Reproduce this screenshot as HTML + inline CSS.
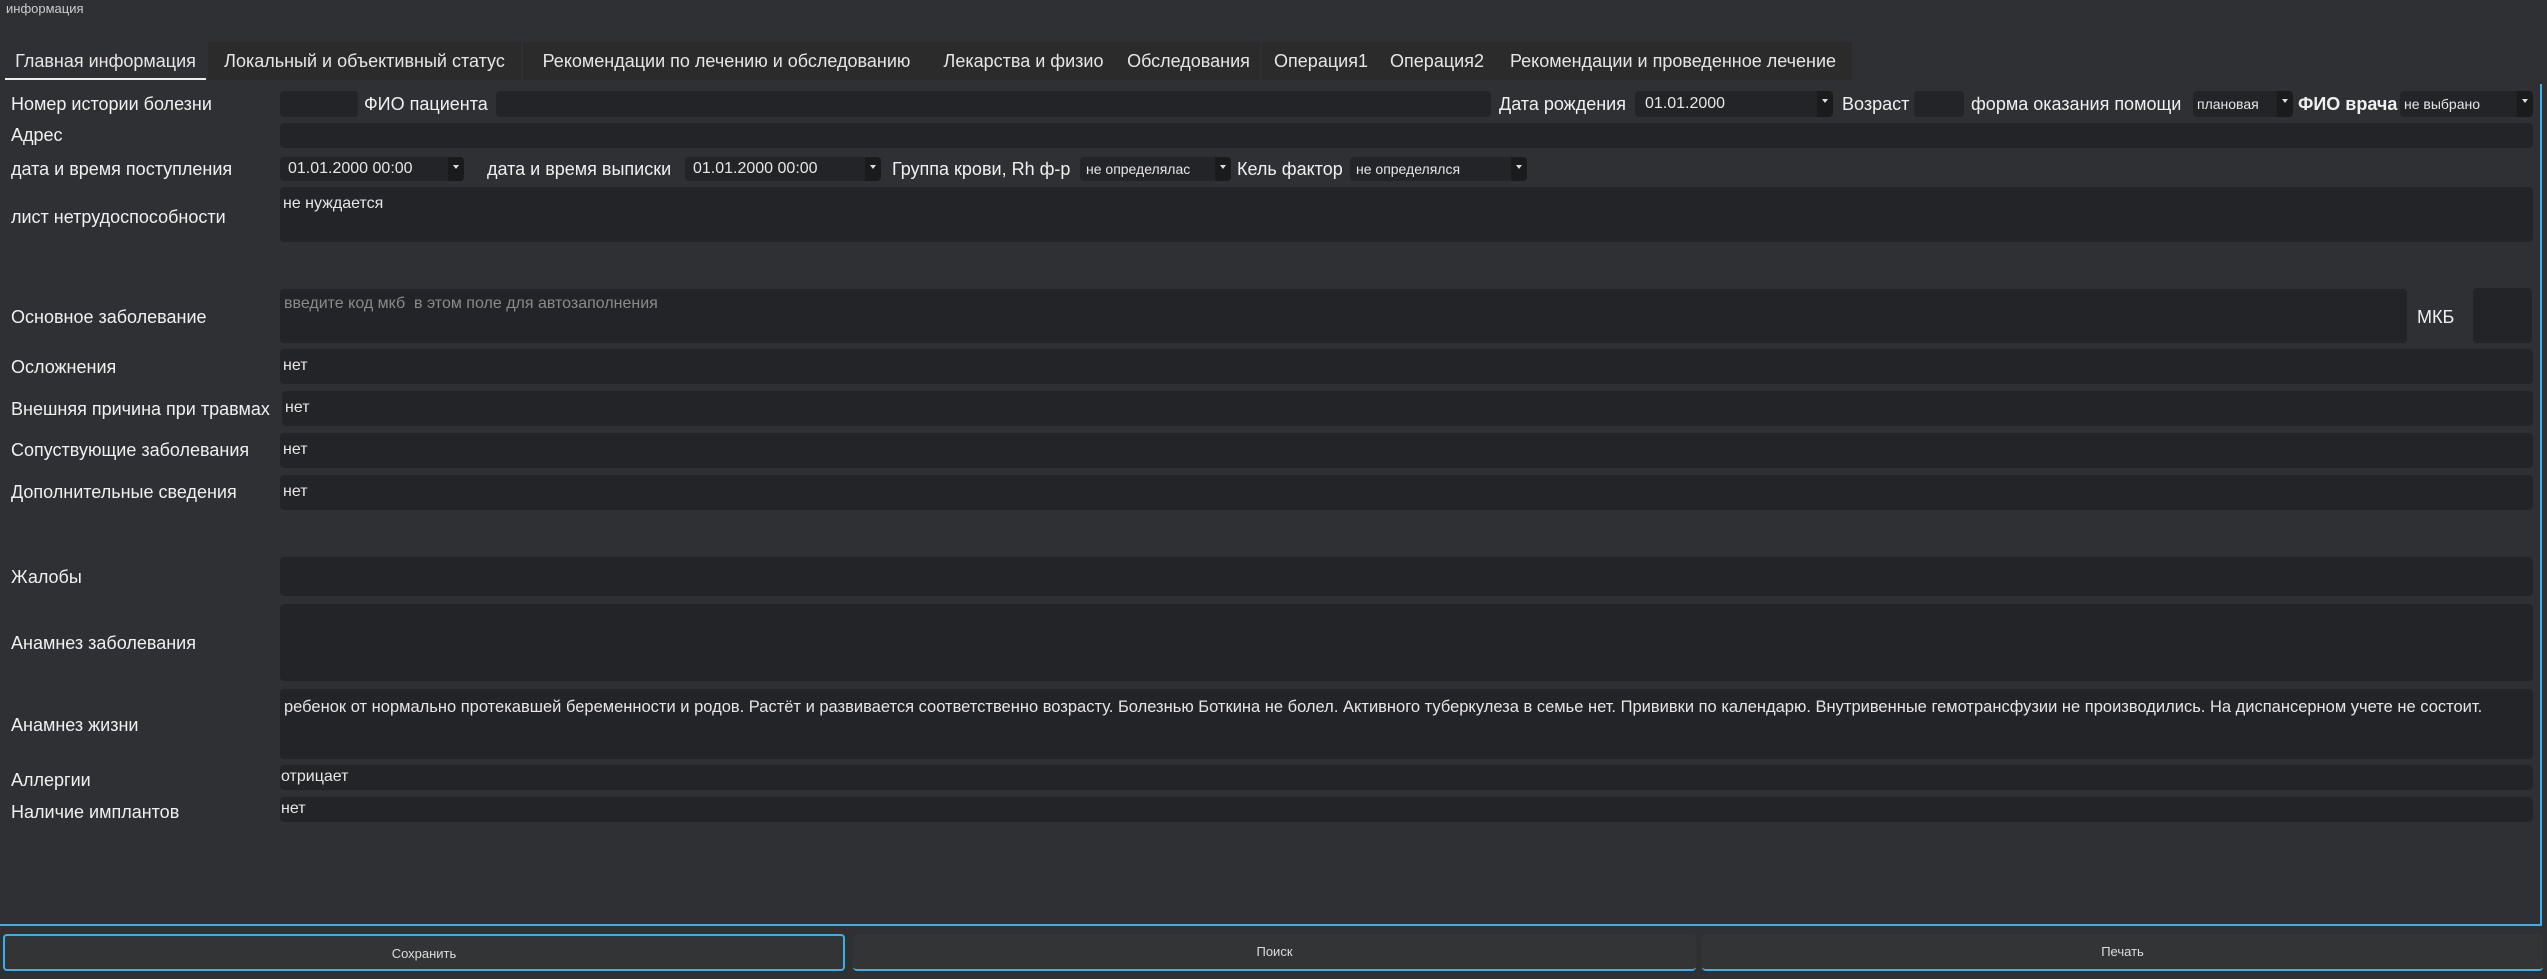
<!DOCTYPE html>
<html><head><meta charset="utf-8"><style>
*{margin:0;padding:0;box-sizing:border-box}
body{width:2547px;height:979px;background:#2f3033;font-family:"Liberation Sans","DejaVu Sans",sans-serif;color:#eff0f1;position:relative;overflow:hidden}
.a{position:absolute;white-space:nowrap}
.l{font-size:18px;line-height:22px}
.b{background:#232427;border-radius:4px}
.t{font-size:16px;color:#e6e6e6}
.tab{position:absolute;top:42px;height:38px;background:#2b2b2c;font-size:18px;line-height:38px;text-align:center;color:#e6e6e6}
.dd{position:absolute;right:0;top:0;bottom:0;width:16px;background:#1a1b1c;border-radius:0 4px 4px 0}
.dd:after{content:"";position:absolute;left:5px;top:8px;border:3px solid transparent;border-top:4px solid #ddd}
.btn{position:absolute;top:934px;height:37px;background:#333435;border-bottom:2px solid #3daee9;border-radius:4px;font-size:13px;text-align:center;line-height:36px;color:#ddd}
</style></head><body>
<div class="a" style="left:6px;top:1px;font-size:13px;color:#ccc">информация</div>
<div class="tab" style="left:5px;width:201px;background:#2f3033;border-bottom:2px solid #eee">Главная информация</div>
<div class="tab" style="left:208px;width:313px">Локальный и объективный статус</div>
<div class="tab" style="left:523px;width:407px">Рекомендации по лечению и обследованию</div>
<div class="tab" style="left:930px;width:187px">Лекарства и физио</div>
<div class="tab" style="left:1117px;width:143px">Обследования</div>
<div class="tab" style="left:1262px;width:118px">Операция1</div>
<div class="tab" style="left:1380px;width:114px">Операция2</div>
<div class="tab" style="left:1494px;width:358px">Рекомендации и проведенное лечение</div>
<div class="a" style="left:2540px;top:84px;width:2px;height:842px;background:#3daee9"></div>
<div class="a" style="left:0;top:924px;width:2542px;height:2px;background:#3daee9"></div>

<div class="a l" style="left:11px;top:93px">Номер истории болезни</div>
<div class="a b" style="left:280px;top:91px;width:78px;height:26px"></div>
<div class="a l" style="left:364px;top:93px">ФИО пациента</div>
<div class="a b" style="left:496px;top:91px;width:995px;height:26px"></div>
<div class="a l" style="left:1499px;top:93px">Дата рождения</div>
<div class="a b" style="left:1635px;top:91px;width:198px;height:26px"><span class="a t" style="left:10px;top:4px">01.01.2000</span><div class="dd"></div></div>
<div class="a l" style="left:1842px;top:93px">Возраст</div>
<div class="a b" style="left:1914px;top:91px;width:50px;height:26px"></div>
<div class="a l" style="left:1971px;top:93px">форма оказания помощи</div>
<div class="a b" style="left:2193px;top:91px;width:100px;height:26px"><span class="a t" style="left:4px;top:5px;font-size:14px">плановая</span><div class="dd"></div></div>
<div class="a l" style="left:2298px;top:93px;font-weight:bold">ФИО врача</div>
<div class="a b" style="left:2400px;top:91px;width:133px;height:26px"><span class="a t" style="left:4px;top:5px;font-size:14px">не выбрано</span><div class="dd"></div></div>

<div class="a l" style="left:11px;top:124px">Адрес</div>
<div class="a b" style="left:280px;top:123px;width:2253px;height:25px"></div>

<div class="a l" style="left:11px;top:158px">дата и время поступления</div>
<div class="a b" style="left:280px;top:157px;width:184px;height:24px"><span class="a t" style="left:8px;top:3px">01.01.2000 00:00</span><div class="dd"></div></div>
<div class="a l" style="left:487px;top:158px">дата и время выписки</div>
<div class="a b" style="left:685px;top:157px;width:196px;height:24px"><span class="a t" style="left:8px;top:3px">01.01.2000 00:00</span><div class="dd"></div></div>
<div class="a l" style="left:892px;top:158px">Группа крови, Rh ф-р</div>
<div class="a b" style="left:1080px;top:157px;width:151px;height:24px"><span class="a t" style="left:6px;top:4px;font-size:14px">не определялас</span><div class="dd"></div></div>
<div class="a l" style="left:1237px;top:158px">Кель фактор</div>
<div class="a b" style="left:1350px;top:157px;width:177px;height:24px"><span class="a t" style="left:6px;top:4px;font-size:14px">не определялся</span><div class="dd"></div></div>

<div class="a l" style="left:11px;top:206px">лист нетрудоспособности</div>
<div class="a b" style="left:280px;top:187px;width:2253px;height:55px"><span class="a t" style="left:3px;top:8px">не нуждается</span></div>

<div class="a l" style="left:11px;top:306px">Основное заболевание</div>
<div class="a b" style="left:280px;top:289px;width:2127px;height:54px"><span class="a t" style="left:4px;top:6px;color:#8a8a8a">введите код мкб&nbsp; в этом поле для автозаполнения</span></div>
<div class="a l" style="left:2417px;top:306px">МКБ</div>
<div class="a b" style="left:2473px;top:288px;width:59px;height:55px"></div>

<div class="a l" style="left:11px;top:356px">Осложнения</div>
<div class="a b" style="left:280px;top:349px;width:2253px;height:35px"><span class="a t" style="left:3px;top:8px">нет</span></div>
<div class="a l" style="left:11px;top:398px">Внешняя причина при травмах</div>
<div class="a b" style="left:282px;top:391px;width:2251px;height:35px"><span class="a t" style="left:3px;top:8px">нет</span></div>
<div class="a l" style="left:11px;top:439px">Сопуствующие заболевания</div>
<div class="a b" style="left:280px;top:433px;width:2253px;height:35px"><span class="a t" style="left:3px;top:8px">нет</span></div>
<div class="a l" style="left:11px;top:481px">Дополнительные сведения</div>
<div class="a b" style="left:280px;top:475px;width:2253px;height:35px"><span class="a t" style="left:3px;top:8px">нет</span></div>

<div class="a l" style="left:11px;top:566px">Жалобы</div>
<div class="a b" style="left:280px;top:557px;width:2253px;height:39px"></div>
<div class="a l" style="left:11px;top:632px">Анамнез заболевания</div>
<div class="a b" style="left:280px;top:604px;width:2253px;height:77px"></div>
<div class="a l" style="left:11px;top:714px">Анамнез жизни</div>
<div class="a b" style="left:280px;top:689px;width:2253px;height:70px"><span class="a t" style="left:4px;top:9px;font-size:16.5px">ребенок от нормально протекавшей беременности и родов. Растёт и развивается соответственно возрасту. Болезнью Боткина не болел. Активного туберкулеза в семье нет. Прививки по календарю. Внутривенные гемотрансфузии не производились. На диспансерном учете не состоит.</span></div>
<div class="a l" style="left:11px;top:769px">Аллергии</div>
<div class="a b" style="left:280px;top:765px;width:2253px;height:25px"><span class="a t" style="left:1px;top:3px">отрицает</span></div>
<div class="a l" style="left:11px;top:801px">Наличие имплантов</div>
<div class="a b" style="left:280px;top:797px;width:2253px;height:25px"><span class="a t" style="left:1px;top:3px">нет</span></div>

<div class="btn" style="left:3px;width:842px;border:2px solid #3daee9">Сохранить</div>
<div class="btn" style="left:853px;width:843px">Поиск</div>
<div class="btn" style="left:1702px;width:841px">Печать</div>
</body></html>
